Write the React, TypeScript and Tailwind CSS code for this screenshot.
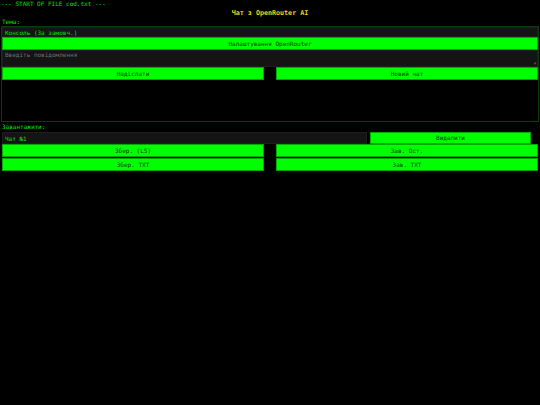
'use client';

import { useState } from 'react';

const BTN =
  'flex items-center justify-center border border-[#00a800] bg-[#00ff00] text-[6px] leading-none text-[#0a3a0a]';

export default function App() {
  const [theme] = useState('Консоль (За замовч.)');
  const [chat] = useState('Чат №1');

  return (
    <div className="min-h-[405px] w-[540px] bg-black font-['DejaVu_Sans_Mono',monospace] text-[6px] text-[#00e000]">
      {/* file header */}
      <div className="h-[8px] pl-[1px] leading-[8px]">--- START OF FILE cod.txt ---</div>

      <h1 className="h-[10px] text-center text-[6.7px] font-bold leading-[10px] text-[#f2d21b]">
        Чат з OpenRouter AI
      </h1>

      <div className="h-[8px] pl-[2px] leading-[8px]">Тема:</div>

      {/* main panel */}
      <div className="mx-[1px] flex flex-col border border-[#0d3a0d]">
        <div className="flex h-[10px] items-center border border-[#1e1e1e] bg-[#141414] pl-[2px]">{theme}</div>
        <button className={`${BTN} h-[13px] w-full`}>Налаштування OpenRouter</button>
        <div className="relative h-[17px] border border-[#1e1e1e] bg-[#141414] pl-[2px] leading-[7px] text-[#6f6f6f]">
          Введіть повідомлення
          <span className="absolute bottom-[1px] right-[1px] text-[4px] leading-none text-[#555]">◢</span>
        </div>
        <div className="flex h-[13px] justify-between">
          <button className={`${BTN} w-[262px]`}>Надіслати</button>
          <button className={`${BTN} w-[262px]`}>Новий чат</button>
        </div>
        <div className="h-[41px]" />
      </div>

      <div className="h-[10px] pl-[2px] leading-[10px]">Завантажити:</div>

      <div className="flex h-[12px] gap-[3px] pl-[2px]">
        <div className="flex w-[365px] items-center border border-[#1e1e1e] bg-[#141414] pl-[2px]">{chat}</div>
        <button className={`${BTN} w-[161px]`}>Видалити</button>
      </div>

      <div className="flex flex-col gap-[1px] px-[2px]">
        <div className="flex h-[13px] justify-between">
          <button className={`${BTN} w-[262px]`}>Збер. (LS)</button>
          <button className={`${BTN} w-[262px]`}>Зав. Ост.</button>
        </div>
        <div className="flex h-[13px] justify-between">
          <button className={`${BTN} w-[262px]`}>Збер. TXT</button>
          <button className={`${BTN} w-[262px]`}>Зав. TXT</button>
        </div>
      </div>
    </div>
  );
}
